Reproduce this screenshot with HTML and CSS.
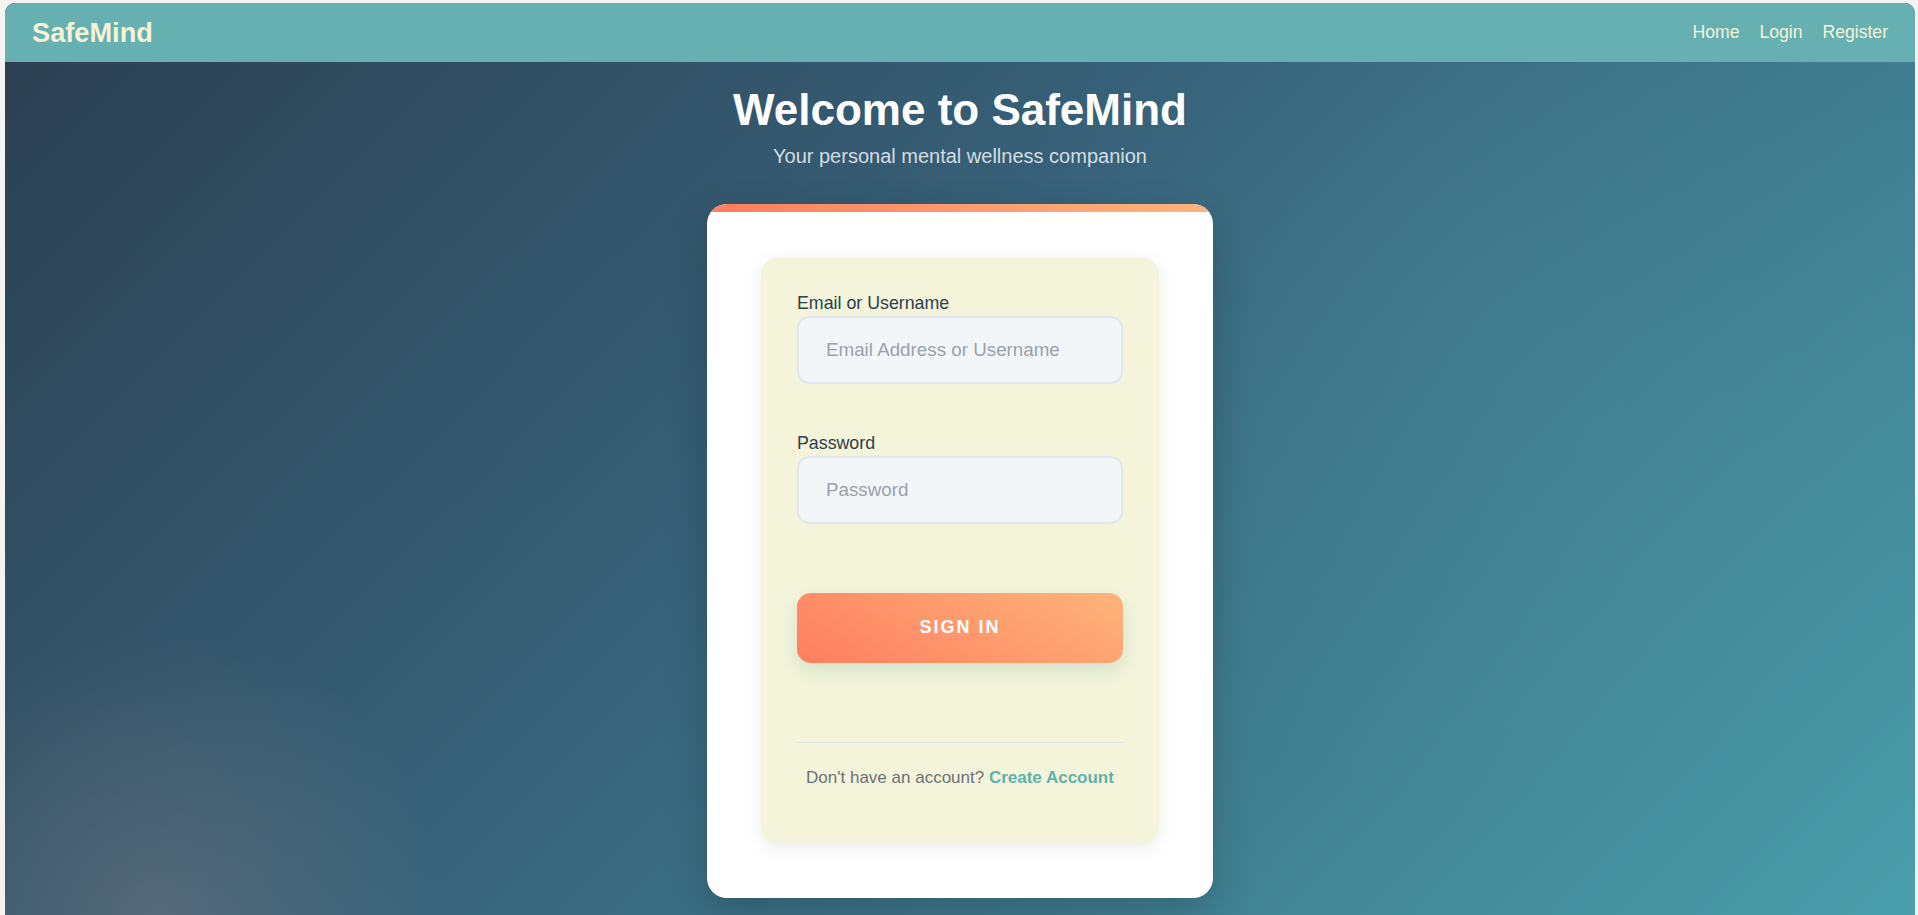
FILE: index.html
```html
<!DOCTYPE html>
<html lang="en">
<head>
<meta charset="utf-8">
<title>SafeMind - Login</title>
<link rel="stylesheet" href="styles.css">
</head>
<body>
<div class="frame">
  <header class="topbar">
    <a class="brand" href="#">SafeMind</a>
    <nav class="nav">
      <a href="#">Home</a>
      <a href="#">Login</a>
      <a href="#">Register</a>
    </nav>
  </header>
  <main class="main">
    <h1 class="title">Welcome to SafeMind</h1>
    <p class="subtitle">Your personal mental wellness companion</p>
    <section class="card">
      <form class="panel">
        <div class="group">
          <label class="label" for="user">Email or Username</label>
          <input class="field" id="user" type="text" placeholder="Email Address or Username">
        </div>
        <div class="group">
          <label class="label" for="pass">Password</label>
          <input class="field" id="pass" type="password" placeholder="Password">
        </div>
        <button class="btn" type="button">SIGN IN</button>
        <div class="divider"></div>
        <p class="foot">Don't have an account? <a href="#">Create Account</a></p>
      </form>
    </section>
  </main>
</div>
</body>
</html>
```
FILE: styles.css
```css
* { box-sizing: border-box; }
html, body { margin: 0; height: 100%; overflow: hidden; }
body {
  background: #f4f4f4;
  padding: 3px 3px 0 5px;
  font-family: "Liberation Sans", Arial, sans-serif;
}
.frame {
  min-height: calc(100vh - 3px);
  border-radius: 10px 10px 0 0;
  overflow: hidden;
  background:
    radial-gradient(circle at 150px 100%, rgba(255, 175, 150, 0.16) 0, rgba(255, 175, 150, 0) 290px),
    radial-gradient(circle at 78% 35%, rgba(120, 190, 200, 0.08) 0, rgba(120, 190, 200, 0) 500px),
    linear-gradient(135deg, #2c3e50 0%, #37627a 45%, #4a9eab 100%);
}
.topbar {
  height: 59px;
  background: #66b0b2;
  display: flex;
  align-items: center;
  justify-content: space-between;
  padding: 0 27px;
}
.brand {
  color: #f5f3d5;
  font-weight: bold;
  font-size: 27.2px;
  text-decoration: none;
}
.nav { display: flex; gap: 20px; }
.nav a {
  color: #f5f3d5;
  font-size: 17.6px;
  text-decoration: none;
}
.main {
  display: flex;
  flex-direction: column;
  align-items: center;
}
.title {
  margin: 23px 0 0;
  font-size: 44px;
  line-height: 50px;
  font-weight: bold;
  color: #ffffff;
}
.subtitle {
  margin: 9.5px 0 0;
  font-size: 20px;
  line-height: 22px;
  color: rgba(255, 255, 255, 0.8);
}
.card {
  position: relative;
  margin-top: 37.5px;
  width: 506px;
  background: #ffffff;
  border-radius: 20px;
  overflow: hidden;
  padding: 54px;
  box-shadow: 0 15px 40px rgba(0, 0, 0, 0.2);
}
.card::before {
  content: "";
  position: absolute;
  left: 0; top: 0; right: 0;
  height: 8px;
  background: linear-gradient(90deg, #ff7e5f, #feb47b);
}
.panel {
  background: #f4f4da;
  border-radius: 16px;
  padding: 35px 36px 56.5px;
  box-shadow: 0 4px 20px rgba(0, 0, 0, 0.08);
  display: flex;
  flex-direction: column;
}
.group { display: flex; flex-direction: column; }
.group + .group { margin-top: 49px; }
.label {
  font-size: 17.8px;
  line-height: 20.5px;
  color: #2c3e50;
  margin-bottom: 2.5px;
}
.field {
  height: 68px;
  width: 100%;
  border: 2px solid #e0e7ef;
  border-radius: 12px;
  background: #f3f6f9;
  padding: 0 27px;
  font-family: "Liberation Sans", Arial, sans-serif;
  font-size: 18.8px;
  color: #2c3e50;
  outline: none;
}
.field::placeholder { color: #9aa1a9; }
.btn {
  margin-top: 68.5px;
  height: 70px;
  width: 100%;
  border: none;
  border-radius: 14px;
  background: linear-gradient(30deg, #ff7e5f 0%, #feb47b 100%);
  color: #ffffff;
  font-family: "Liberation Sans", Arial, sans-serif;
  font-weight: bold;
  font-size: 18px;
  letter-spacing: 2px;
  box-shadow: 0 8px 20px rgba(100, 170, 150, 0.22);
}
.divider {
  margin-top: 79px;
  height: 1px;
  background: #dfe5e6;
}
.foot {
  margin: 25px 0 0;
  text-align: center;
  font-size: 17px;
  line-height: 19.5px;
  color: #6b7178;
}
.foot a {
  color: #5fb1ae;
  font-weight: bold;
  text-decoration: none;
}
```
